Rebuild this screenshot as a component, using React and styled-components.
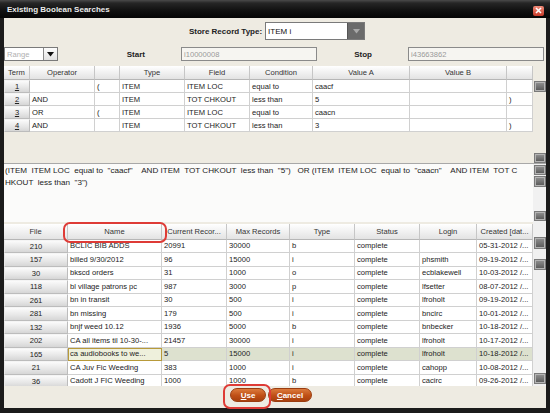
import React from "react";
import styled, { createGlobalStyle } from "styled-components";

const GlobalStyle = createGlobalStyle`
  html, body { margin: 0; padding: 0; background: #fff; }
  body { font-family: "Liberation Sans", Arial, sans-serif; }
  * { box-sizing: border-box; }
`;

const Window = styled.div`
  width: 550px;
  height: 413px;
  background: #1b1b1b;
  display: flex;
  flex-direction: column;
  padding: 0 4px 5px 4px;
  overflow: hidden;
`;

const TitleBar = styled.div`
  height: 18px;
  margin: 0 -4px;
  padding: 0 6px 0 7px;
  display: flex;
  align-items: center;
  justify-content: space-between;
  background: linear-gradient(#4a4a4a 0, #262626 3px, #121212 10px, #050505 100%);
  color: #ececec;
  font-weight: bold;
  font-size: 8px;
`;

const CloseBtn = styled.div`
  width: 11px;
  height: 10px;
  margin-top: 3px;
  border-radius: 2px;
  background: linear-gradient(#ef8a78, #c83a28);
  display: flex;
  align-items: center;
  justify-content: center;
`;

const Body = styled.div`
  flex: 1;
  background: #eeebe2;
  display: flex;
  flex-direction: column;
  min-height: 0;
`;

const StoreRow = styled.div`
  height: 26px;
  display: flex;
  align-items: center;
  justify-content: center;
  gap: 3px;
  padding-left: 4px;
`;

const Label = styled.span`
  font-size: 8px;
  font-weight: bold;
  color: #222;
`;

const Combo = styled.div`
  display: flex;
  height: ${p => p.$h}px;
  width: ${p => p.$w}px;
  border: 1px solid #7a7a7a;
  background: #fff;
`;

const ComboText = styled.div`
  flex: 1;
  font-size: ${p => (p.$muted ? 7.6 : 8)}px;
  color: ${p => (p.$muted ? "#b0b0b0" : "#111")};
  padding-left: 2px;
  display: flex;
  align-items: center;
`;

const ComboButton = styled.div`
  width: ${p => p.$w}px;
  display: flex;
  align-items: center;
  justify-content: center;
  background: ${p => (p.$dark ? "#6b6b6b" : "linear-gradient(#fdfdfd, #e2e2e2)")};
  border-left: 1px solid ${p => (p.$dark ? "#555" : "#8a8a8a")};
  svg { display: block; }
`;

const RangeRow = styled.div`
  height: 20px;
  display: grid;
  grid-template-columns: 54px 123px 136px 91px 136px;
  align-items: center;
`;

const FieldLabel = styled(Label)`
  text-align: right;
  padding-right: 36px;
`;

const TextInput = styled.div`
  height: 14px;
  border: 1px solid #8a8a8a;
  background: #f6f5f1;
  color: #9a9a9a;
  font-size: 7.6px;
  padding-left: 2px;
  display: flex;
  align-items: center;
`;

const Section = styled.div`
  position: relative;
  display: flex;
  height: ${p => p.$h}px;
  background: ${p => p.$bg || "transparent"};
  border-top: ${p => (p.$line ? "1px solid #a8a8a8" : "none")};
  overflow: hidden;
`;

const TableArea = styled.div`
  flex: 0 0 529px;
  padding-top: ${p => p.$pt || 0}px;
  overflow: hidden;
`;

const ScrollCol = styled.div`
  flex: 1;
  display: flex;
  flex-direction: column;
  align-items: center;
  padding: ${p => p.$pad};
  background: ${p => p.$bg || "#f2f2f2"};
`;

const Square = styled.div`
  width: 10px;
  height: ${p => p.$h || 9}px;
  margin-top: ${p => p.$mt || 0}px;
  background: linear-gradient(#8c8c8c, #5c5c5c);
  border: 1px solid #b4b4b4;
  box-shadow: 0 0 0 1px #7a7a7a;
  flex-shrink: 0;
`;

const Spacer = styled.div`
  flex: 1;
`;

const Row = styled.div`
  display: grid;
  grid-template-columns: ${p => p.$cols};
  height: ${p => p.$h}px;
`;

const HeadCell = styled.div`
  background: linear-gradient(#ffffff, #e3e3e3);
  border-right: 1px solid #c6c6c6;
  border-bottom: 1px solid #b6b6b6;
  font-size: 7.6px;
  color: #333;
  display: flex;
  align-items: center;
  justify-content: center;
  white-space: nowrap;
  overflow: hidden;
`;

const Cell = styled.div`
  background: ${p => (p.$focus ? "#eef0dc" : p.$sel ? "#dde1cf" : "#fff")};
  border-right: 1px solid #d0d0d0;
  border-bottom: 1px solid #d0d0d0;
  outline: ${p => (p.$focus ? "1px solid #b89a3a" : "none")};
  outline-offset: -1px;
  font-size: 7.6px;
  color: #222;
  padding-left: 2px;
  display: flex;
  align-items: center;
  white-space: pre;
  overflow: hidden;
`;

const RowButton = styled.div`
  background: linear-gradient(#fbfbfb, #e6e6e6 60%, #d6d6d6);
  border: 1px solid #bcbcbc;
  border-top-color: #f4f4f4;
  border-left-color: #e8e8e8;
  font-size: 7.6px;
  color: #222;
  display: flex;
  align-items: center;
  justify-content: center;
  text-decoration: ${p => (p.$underline ? "underline" : "none")};
`;

const ExprText = styled.div`
  flex: 0 0 529px;
  font-size: 8.1px;
  color: #222;
  line-height: 12px;
  padding: 1px 0 0 1px;
  white-space: pre;
  overflow: hidden;
`;

const Highlight = styled.div`
  position: absolute;
  border: 2px solid #de3b36;
  border-radius: 7px;
  pointer-events: none;
`;

const Footer = styled.div`
  flex: 1;
  display: flex;
  justify-content: center;
  align-items: flex-start;
  padding: 2px 8px 0 0;
  gap: 2px;
`;

const ButtonWrap = styled.div`
  position: relative;
`;

const PillButton = styled.div`
  width: ${p => p.$w}px;
  height: 14px;
  border-radius: 8px;
  background: linear-gradient(#dc7a3c, #bf4f16 55%, #a8400e);
  border: 1px solid #9a3c10;
  color: #fff;
  font-size: 8px;
  font-weight: bold;
  display: flex;
  align-items: center;
  justify-content: center;
  u { text-decoration: underline; }
`;

const termCols = "26px 65px 25px 65px 65px 63px 97px 97px 26px";
const termHead = ["Term", "Operator", "", "Type", "Field", "Condition", "Value A", "Value B", ""];
const terms = [
  ["1", "", "(", "ITEM", "ITEM LOC", "equal to", "caacf", "", ""],
  ["2", "AND", "", "ITEM", "TOT CHKOUT", "less than", "5", "", ")"],
  ["3", "OR", "(", "ITEM", "ITEM LOC", "equal to", "caacn", "", ""],
  ["4", "AND", "", "ITEM", "TOT CHKOUT", "less than", "3", "", ")"],
];

const fileCols = "64px 94px 65px 63px 65px 65px 57px 56px";
const fileHead = ["File", "Name", "Current Recor...", "Max Records", "Type", "Status", "Login", "Created [dat..."];
const files = [
  ["210", "BCLIC BIB ADDS", "20991", "30000", "b", "complete", "", "05-31-2012 /..."],
  ["157", "billed 9/30/2012", "96", "15000", "i", "complete", "phsmith", "09-19-2012 /..."],
  ["30", "bkscd orders", "31", "1000", "o", "complete", "ecblakewell", "10-03-2012 /..."],
  ["118", "bl village patrons pc", "987", "3000", "p", "complete", "lfsetter", "08-07-2012 /..."],
  ["261", "bn in transit", "30", "500", "i", "complete", "lfroholt", "09-19-2012 /..."],
  ["281", "bn missing", "179", "500", "i", "complete", "bncirc", "10-01-2012 /..."],
  ["132", "bnjf weed 10.12", "1936", "5000", "b", "complete", "bnbecker", "10-18-2012 /..."],
  ["202", "CA all items til 10-30-...", "21457", "30000", "i", "complete", "lfroholt", "10-17-2012 /..."],
  ["165", "ca audiobooks to we...", "5", "15000", "i", "complete", "lfroholt", "10-18-2012 /..."],
  ["21", "CA Juv Fic Weeding", "383", "1000", "i", "complete", "cahopp", "10-08-2012 /..."],
  ["36", "Cadott J FIC Weeding", "1000", "1000", "b", "complete", "cacirc", "09-26-2012 /..."],
];
const selectedFile = "165";

const expr1 =
  '(ITEM  ITEM LOC  equal to  "caacf"    AND ITEM  TOT CHKOUT  less than  "5")   OR (ITEM  ITEM LOC  equal to  "caacn"    AND ITEM  TOT C';
const expr2 = 'HKOUT  less than  "3")';

const Arrow = ({ color }) => (
  <svg width="7" height="5" viewBox="0 0 7 5">
    <path d="M0 0 L7 0 L3.5 4.5 Z" fill={color} />
  </svg>
);

export default function App() {
  return (
    <>
      <GlobalStyle />
      <Window>
        <TitleBar>
          <span>Existing Boolean Searches</span>
          <CloseBtn>
            <svg width="7" height="7" viewBox="0 0 7 7">
              <path d="M1 1 L6 6 M6 1 L1 6" stroke="#fff" strokeWidth="1.6" />
            </svg>
          </CloseBtn>
        </TitleBar>
        <Body>
          <StoreRow>
            <Label>Store Record Type:</Label>
            <Combo $w={100} $h={18}>
              <ComboText>ITEM i</ComboText>
              <ComboButton $w={17} $dark>
                <Arrow color="#a8a8a8" />
              </ComboButton>
            </Combo>
          </StoreRow>

          <RangeRow>
            <Combo $w={54} $h={14}>
              <ComboText $muted>Range</ComboText>
              <ComboButton $w={14}>
                <Arrow color="#111" />
              </ComboButton>
            </Combo>
            <FieldLabel>Start</FieldLabel>
            <TextInput>i10000008</TextInput>
            <FieldLabel>Stop</FieldLabel>
            <TextInput>i43663862</TextInput>
          </RangeRow>

          <Section $h={99}>
            <TableArea $pt={2}>
              <Row $cols={termCols} $h={14}>
                {termHead.map((h, i) => (
                  <HeadCell key={`th-${i}`}>{h}</HeadCell>
                ))}
              </Row>
              {terms.map(t => (
                <Row key={`term-${t[0]}`} $cols={termCols} $h={13}>
                  <RowButton $underline>{t[0]}</RowButton>
                  {t.slice(1).map((v, i) => (
                    <Cell key={`tc-${i}`}>{v}</Cell>
                  ))}
                </Row>
              ))}
            </TableArea>
            <ScrollCol $pad="16px 0 1px 0" $bg="#eeebe2">
              <Square $mt={2} />
              <Spacer />
              <Square $h={8} />
            </ScrollCol>
          </Section>

          <Section $h={59} $bg="#fbfbfa" $line>
            <ExprText>
              {expr1}
              {"\n"}
              {expr2}
            </ExprText>
            <ScrollCol $pad="2px 0 2px 0" $bg="#f1f1f1">
              <Square $h={8} />
              <Square $h={9} $mt={3} />
              <Spacer />
              <Square $h={8} />
            </ScrollCol>
          </Section>

          <Section $h={164}>
            <TableArea $pt={2}>
              <Row $cols={fileCols} $h={15.5}>
                {fileHead.map((h, i) => (
                  <HeadCell key={`fh-${i}`}>{h}</HeadCell>
                ))}
              </Row>
              {files.map(f => {
                const sel = f[0] === selectedFile;
                return (
                  <Row key={`file-${f[0]}`} $cols={fileCols} $h={13.5}>
                    <RowButton>{f[0]}</RowButton>
                    {f.slice(1).map((v, i) => (
                      <Cell key={`fc-${i}`} $sel={sel} $focus={sel && i === 0}>
                        {v}
                      </Cell>
                    ))}
                  </Row>
                );
              })}
            </TableArea>
            <ScrollCol $pad="16px 0 3px 0" $bg="#f0f0f0">
              <Square $h={10} />
              <Square $h={9} $mt={12} />
              <Spacer />
              <Square $h={9} />
            </ScrollCol>
            <Highlight style={{ left: 59, top: 0, width: 104, height: 21 }} />
          </Section>

          <Footer>
            <ButtonWrap>
              <PillButton $w={36}>
                <span>
                  <u>U</u>se
                </span>
              </PillButton>
              <Highlight style={{ left: -7, top: -4, right: -5, bottom: -7 }} />
            </ButtonWrap>
            <PillButton $w={44}>
              <span>
                <u>C</u>ancel
              </span>
            </PillButton>
          </Footer>
        </Body>
      </Window>
    </>
  );
}
